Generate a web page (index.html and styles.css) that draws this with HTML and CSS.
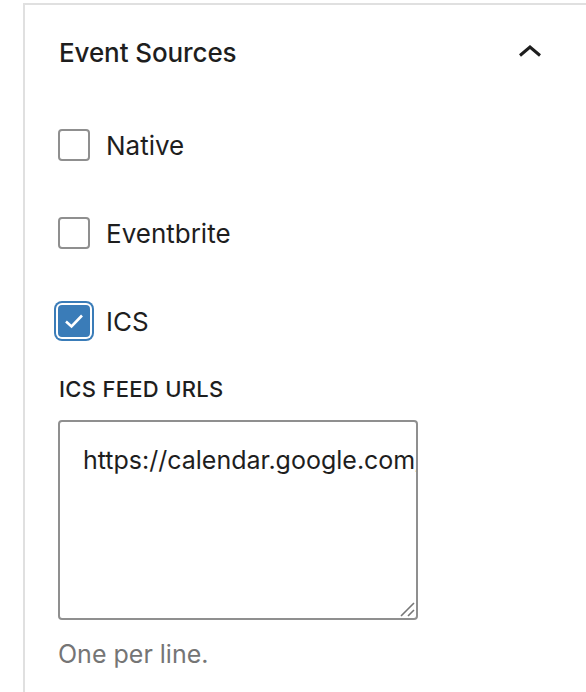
FILE: index.html
```html
<!DOCTYPE html>
<html>
<head>
<meta charset="utf-8">
<link rel="stylesheet" href="styles.css">
</head>
<body>
<div class="sidebar">
  <div class="panel">
    <div class="panel-title">
      <span class="title-text">Event Sources</span>
      <svg class="chevron" width="24" height="12" viewBox="0 0 24 12"><path d="M2 10.5 L12 2 L22 10.5" fill="none" stroke="#1e1e1e" stroke-width="3"/></svg>
    </div>
    <div class="panel-body">
      <label class="check-row"><span class="box"></span><span class="check-label">Native</span></label>
      <label class="check-row"><span class="box"></span><span class="check-label">Eventbrite</span></label>
      <label class="check-row"><span class="box checked"><svg width="20" height="16" viewBox="0 0 20 16"><path d="M2 8.5 L7.5 13.5 L18 2.5" fill="none" stroke="#fff" stroke-width="2.6"/></svg></span><span class="check-label">ICS</span></label>
      <div class="field">
        <div class="field-label">ICS FEED URLS</div>
        <div class="textarea-wrap">
          <textarea class="textarea" wrap="off" spellcheck="false">https://calendar.google.com/calendar/ical/basic.ics</textarea>
          <svg class="resizer" width="16" height="16" viewBox="0 0 16 16"><path d="M2 15 L15 2 M9 15 L15 9" stroke="#777" stroke-width="1.6"/></svg>
        </div>
        <div class="help">One per line.</div>
      </div>
    </div>
  </div>
</div>
</body>
</html>
```
FILE: styles.css
```css
html, body {
  margin: 0;
  padding: 0;
  background: #fff;
}
body {
  font-family: Inter, "Noto Sans", sans-serif;
  color: #1e1e1e;
  overflow: hidden;
}
.sidebar {
  margin-left: 23px;
  border-left: 2px solid #e0e0e0;
  height: 692px;
}
.panel {
  margin-top: 3px;
  border-top: 2px solid #e0e0e0;
}
.panel-title {
  display: flex;
  align-items: center;
  justify-content: space-between;
  padding: 32px 44px 32px 34px;
  height: 32px;
}
.title-text {
  font-size: 26px;
  font-weight: 500;
  line-height: 32px;
  letter-spacing: -0.1px;
}
.chevron {
  display: block;
  margin-top: -4px;
}
.panel-body {
  padding: 28px 32px 0 33px;
  display: flex;
  flex-direction: column;
}
.check-row {
  display: flex;
  align-items: center;
  height: 32px;
  margin-bottom: 56px;
}
.check-row:nth-child(3) {
  margin-bottom: 38px;
}
.box {
  box-sizing: border-box;
  width: 32px;
  height: 32px;
  border: 2px solid #8f8f8f;
  border-radius: 4px;
  display: flex;
  align-items: center;
  justify-content: center;
  flex: none;
}
.box.checked {
  background: #3a7cb8;
  border-color: #3a7cb8;
  box-shadow: 0 0 0 2px #fff, 0 0 0 4px #3a7cb8;
}
.check-label {
  font-size: 26px;
  line-height: 32px;
  margin-left: 16px;
  margin-top: 2px;
}
.field-label {
  font-size: 22px;
  font-weight: 500;
  line-height: 28px;
  letter-spacing: 0.3px;
  margin-left: 1px;
}
.textarea-wrap {
  position: relative;
  width: 360px;
  height: 200px;
  margin-top: 17px;
}
.textarea {
  box-sizing: border-box;
  width: 360px;
  height: 200px;
  border: 2px solid #8f8f8f;
  border-radius: 4px;
  padding: 22px 0 0 23px;
  font-family: Inter, "Noto Sans", sans-serif;
  font-size: 25px;
  line-height: 32px;
  color: #1e1e1e;
  resize: none;
  overflow: hidden;
  white-space: pre;
  outline: none;
  display: block;
  margin: 0;
}
.resizer {
  position: absolute;
  right: 3px;
  bottom: 3px;
}
.help {
  margin-top: 18px;
  font-size: 25px;
  line-height: 32px;
  color: #757575;
}
```
